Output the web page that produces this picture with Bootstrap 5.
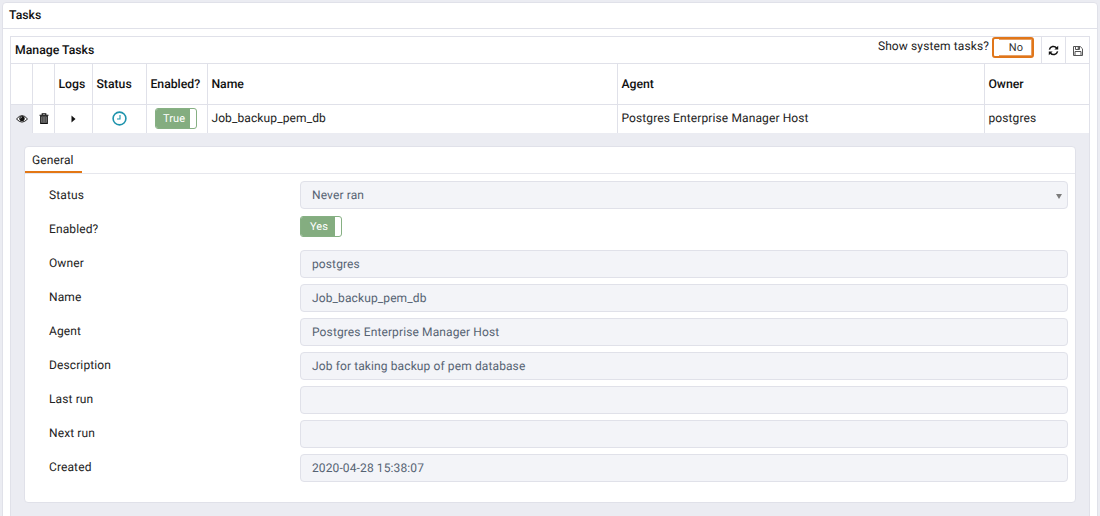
<!DOCTYPE html>
<html lang="en">
<head>
<meta charset="utf-8">
<meta name="viewport" content="width=device-width, initial-scale=1">
<title>Tasks</title>
<link href="https://cdn.jsdelivr.net/npm/bootstrap@5.3.0/dist/css/bootstrap.min.css" rel="stylesheet">
<style>
:root{--line:#e0e1e9;--shade:#ebecf2}
html,body{height:516px;overflow:hidden}
body{background:var(--shade);font-family:Roboto,"Liberation Sans",sans-serif;font-size:12px;letter-spacing:.115px;text-rendering:geometricPrecision;line-height:18px;color:#222}
.fw-medium5{font-weight:500;color:#111;font-size:12.25px;letter-spacing:0}
.panel{margin:2px 2px 0;height:530px;border:1px solid var(--line);border-radius:4px;background:#fff}
.panel-title{height:26px;padding:3px 0 0 6px;border-bottom:1px solid var(--line)}
.grid-box{margin:7px 7px 0;height:500px;border:1px solid var(--line);background:var(--shade)}
.toolbar{height:27px;border-bottom:1px solid var(--line);background:#fff;padding-left:4px}
.tool-btn{width:24px;border-left:1px solid var(--line);padding-top:1px}
.tasks{table-layout:fixed;width:100%;margin:0;border-collapse:separate;border-spacing:0;background:#fff}
.tasks th,.tasks td{padding:0 0 0 3.4px;border-left:1px solid var(--line);white-space:nowrap;vertical-align:middle}
.tasks th:first-child,.tasks td:first-child{border-left:0}
.tasks th{height:41px;border-bottom:1px solid var(--line)}
.tasks td{height:28px;padding-bottom:2px}
.tasks td.ic{padding:0 0 1px;text-align:center}
.tasks svg,.tool-btn svg{display:block;margin:auto}
.toggle{width:42px;height:21px;border:1px solid #86b083;border-radius:3px;background:#fff;color:#fff;font-size:11px;line-height:19px;overflow:hidden}
.toggle span{display:block;width:34px;height:100%;background:#84ad80;text-align:center;padding-left:2px}
.toggle-off{width:42px;height:21px;border:2px solid #e0761a;border-radius:3px;font-size:11px;line-height:18px;padding-left:6px;text-align:center;color:#333;background:linear-gradient(#e8a064,#e8a064) 5px 0/33px 1px no-repeat,linear-gradient(#e8a064,#e8a064) 5px 100%/33px 1px no-repeat,linear-gradient(#e8a064,#e8a064) 100% 0/1px 100% no-repeat,#fff;margin:0 7px 0 3px}
.detail{margin:13px 13px 0;height:357px;border:1px solid var(--line);border-radius:4px;background:#fff}
.tabs{height:27px;border-bottom:1px solid #e6e7ed}
.tab-on{width:57px;height:26px;padding:4px 0 0 7px;border-bottom:2px solid #e37714}
.fields{padding:8px 7px 0 24px}
.frow{height:34px}
.frow>label{width:251px;padding-top:4px}
.field{height:28px;border:1px solid var(--line);border-radius:4px;background:#f3f4f8;color:#566373;padding:4px 5px 0 11px}
.field.sel{margin-top:-1px}
.arrow{border:3.5px solid transparent;border-top:5px solid #7c7c7c;border-bottom:0;margin-top:8px;height:0}
</style>
</head>
<body>
<main class="panel">
  <div class="panel-title fw-medium5">Tasks</div>
  <section class="grid-box">
    <div class="toolbar d-flex">
      <div class="fw-medium5 flex-grow-1 pt-1">Manage Tasks</div>
      <div>Show system tasks?</div>
      <div class="toggle-off">No</div>
      <div class="tool-btn d-flex"><svg width="11" height="11" viewBox="0 0 11 11" fill="none" stroke="#111" stroke-width="1.5"><path d="M1.4 4.6A4.1 4.1 0 0 1 8.6 3M9.6 6.4A4.1 4.1 0 0 1 2.4 8"/><path d="M10.2.8v3.8H6.4zM.8 10.2V6.4h3.8z" fill="#111" stroke="none"/></svg></div>
      <div class="tool-btn d-flex"><svg width="10" height="10" viewBox="0 0 10 10" fill="none" stroke="#555" stroke-width="1"><path d="M.5.5h6.7l2.3 2.3v6.7h-9zM2.5.5v3h4v-3M2 9.5v-4h6v4"/><path d="M5.3 1v2" stroke-width="1.2"/></svg></div>
    </div>
    <table class="tasks">
      <colgroup><col style="width:21px"><col style="width:22px"><col style="width:38px"><col style="width:54px"><col style="width:61px"><col style="width:410px"><col style="width:367px"><col></colgroup>
      <thead><tr><th></th><th></th><th class="fw-medium5">Logs</th><th class="fw-medium5">Status</th><th class="fw-medium5">Enabled?</th><th class="fw-medium5">Name</th><th class="fw-medium5">Agent</th><th class="fw-medium5">Owner</th></tr></thead>
      <tbody><tr>
        <td class="ic" style="background:var(--shade)"><svg width="12" height="10" viewBox="0 0 12 10"><path d="M.5 5Q6-1.8 11.5 5Q6 11.2.5 5z" fill="#fff" stroke="#222"/><circle cx="6" cy="4.6" r="2.7" fill="#111"/><path d="M4.5 4.4Q4.6 3.1 6 3" fill="none" stroke="#ddd" stroke-width=".7"/></svg></td>
        <td class="ic"><svg width="10" height="11" viewBox="0 0 10 11"><path d="M.5 2.2h9M3.2 2V.7h3.6V2" fill="none" stroke="#111" stroke-width="1.1"/><path d="M1.7 3h6.6v7.4H1.7z" fill="#888" stroke="#111" stroke-width="1.1"/><path d="M3.6 4v5.5M5 4v5.5M6.4 4v5.5" stroke="#333" stroke-width=".7"/></svg></td>
        <td class="ic"><svg width="5" height="8" viewBox="0 0 5 8"><path d="M.5.5 4.5 4 .5 7.5z" fill="#111"/></svg></td>
        <td class="ic"><svg width="15" height="15" viewBox="0 0 15 15" fill="none" stroke="#1d93ac"><circle cx="7.5" cy="7.5" r="6.4" stroke-width="1.6"/><path d="M8 4v4H5" stroke-width="1.1"/></svg></td>
        <td class="ic"><div class="toggle ms-2"><span>True</span></div></td>
        <td>Job_backup_pem_db</td><td>Postgres Enterprise Manager Host</td><td>postgres</td>
      </tr></tbody>
    </table>
    <div class="detail">
      <div class="tabs"><div class="tab-on">General</div></div>
      <div class="fields">
        <div class="frow d-flex"><label>Status</label><div class="field sel flex-grow-1 d-flex justify-content-between">Never ran<i class="arrow"></i></div></div>
        <div class="frow d-flex"><label>Enabled?</label><div class="toggle"><span>Yes</span></div></div>
        <div class="frow d-flex"><label>Owner</label><div class="field flex-grow-1">postgres</div></div>
        <div class="frow d-flex"><label>Name</label><div class="field flex-grow-1">Job_backup_pem_db</div></div>
        <div class="frow d-flex"><label>Agent</label><div class="field flex-grow-1">Postgres Enterprise Manager Host</div></div>
        <div class="frow d-flex"><label>Description</label><div class="field flex-grow-1">Job for taking backup of pem database</div></div>
        <div class="frow d-flex"><label>Last run</label><div class="field flex-grow-1"></div></div>
        <div class="frow d-flex"><label>Next run</label><div class="field flex-grow-1"></div></div>
        <div class="frow d-flex"><label>Created</label><div class="field flex-grow-1">2020-04-28 15:38:07</div></div>
      </div>
    </div>
  </section>
</main>
<script src="https://cdn.jsdelivr.net/npm/bootstrap@5.3.0/dist/js/bootstrap.bundle.min.js"></script>
</body>
</html>
